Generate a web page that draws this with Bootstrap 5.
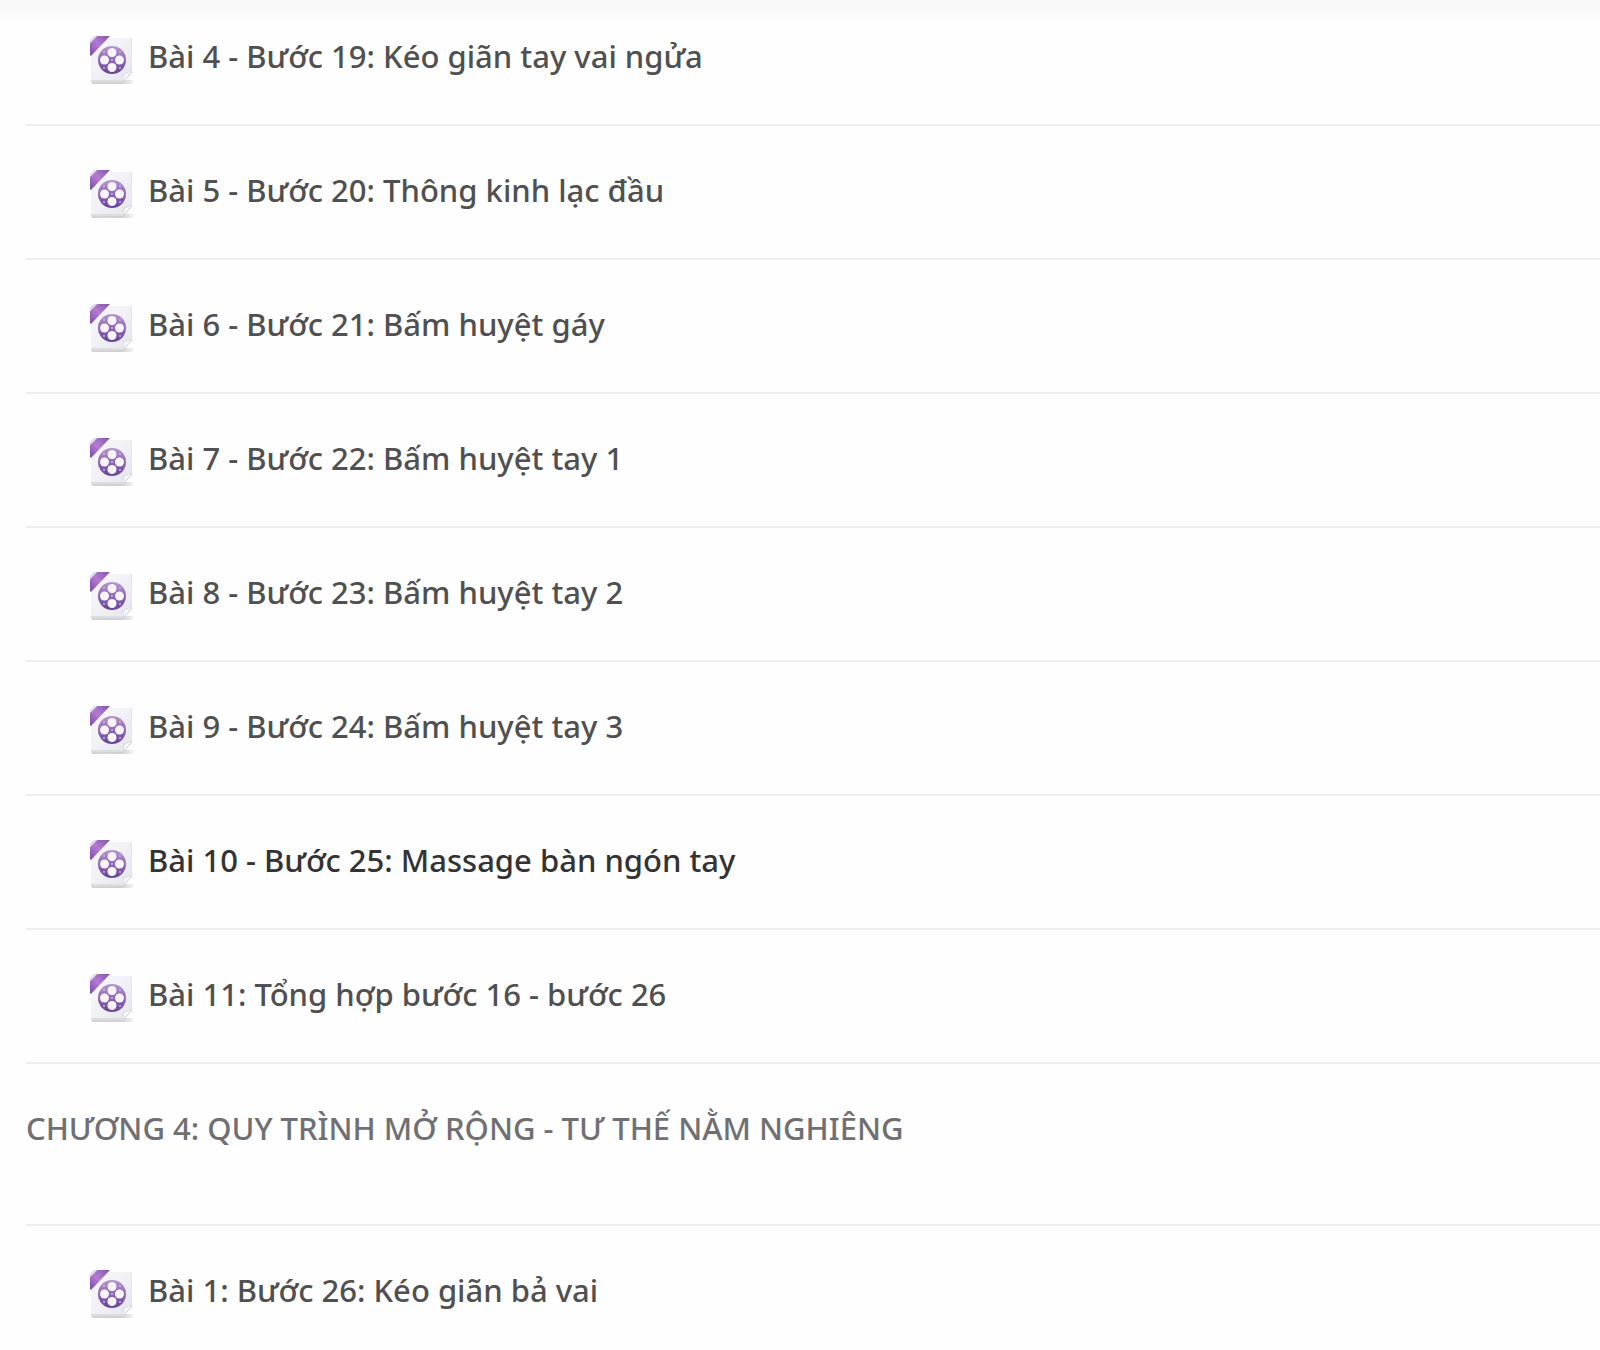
<!DOCTYPE html>
<html lang="vi">
<head>
<meta charset="utf-8">
<meta name="viewport" content="width=device-width, initial-scale=1">
<title>Chương trình học</title>
<link href="https://cdn.jsdelivr.net/npm/bootstrap@5.3.0/dist/css/bootstrap.min.css" rel="stylesheet">
<style>
body { background: #fefefe; font-family: "Noto Sans", "Open Sans", sans-serif; font-size: 31px; font-weight: 500; line-height: 40px; }
.page-top { background: linear-gradient(#f8f8f8, #fefefe 28px); }
.course { padding-left: 26px; }
.lesson { padding: 44px 16px 40px 62px; border-bottom: 2px solid #eee; }
.lesson-first { padding-top: 36px; }
.lesson-last { padding-bottom: 32px; border-bottom: 0; }
.lesson a { color: #505050; gap: 12px; }
.lesson a:hover, .lesson a.current { color: #333; }
.lesson svg { width: 48px; height: 48px; }
.chapter { font-size: 31px; font-weight: 500; line-height: 40px; color: #707074; padding: 44px 16px 76px 0; border-bottom: 2px solid #eee; }
</style>
</head>
<body>
<svg width="0" height="0" class="d-block" aria-hidden="true">
  <defs>
    <linearGradient id="paper" x1="0" y1="0" x2="1" y2="1"><stop offset="0" stop-color="#fafafc"/><stop offset=".5" stop-color="#f0f0f6"/><stop offset="1" stop-color="#e4e4ec"/></linearGradient>
    <linearGradient id="ribbon" x1="0" y1="1" x2="1" y2="0"><stop offset="0" stop-color="#7c4ca6"/><stop offset=".5" stop-color="#b57bd4"/><stop offset="1" stop-color="#7e55a5"/></linearGradient>
    <linearGradient id="reel" x1="0" y1="0" x2="0" y2="1"><stop offset="0" stop-color="#b697cf"/><stop offset=".5" stop-color="#9168b5"/><stop offset="1" stop-color="#654398"/></linearGradient>
    <linearGradient id="shade" x1="0" y1="0" x2="1" y2="0"><stop offset="0" stop-color="#d4d4d6"/><stop offset=".7" stop-color="#d0d0d2"/><stop offset="1" stop-color="#f4f4f4"/></linearGradient>
  </defs>
  <symbol id="film" viewBox="0 0 48 48">
    <path d="M3 44h43l-2 4H4z" fill="url(#shade)"/>
    <path d="M18 2h26v34l-9 10H3V18z" fill="url(#paper)"/>
    <path d="M43.500 2v34" stroke="#e4e4e9"/>
    <path d="M3 45h32" stroke="#dcdce1" stroke-width="2"/>
    <path d="M35 46l1-8 8-3z" fill="#f8f8fb"/>
    <path d="M35 45l1-7 8-3" stroke="#dadae1" fill="none"/>
    <path d="M35 46l9-10" stroke="#cdcdd5" fill="none"/>
    <path d="M9 0h13L3 20l-1-1V7z" fill="url(#ribbon)"/>
    <path d="M2 7l7-7h-3L2 4z" fill="#e4d6ee"/>
    <circle cx="24" cy="24" r="14" fill="url(#reel)"/>
    <g fill="#f7f5fb"><circle cx="24" cy="16.500" r="4.500"/><circle cx="24" cy="31.500" r="4.500"/><circle cx="16.500" cy="24" r="4.500"/><circle cx="31.500" cy="24" r="4.500"/></g>
    <g fill="#c9b4dc"><circle cx="24" cy="24" r="1"/><circle cx="16" cy="16" r="1"/><circle cx="32" cy="16" r="1"/><circle cx="16" cy="32" r="1"/><circle cx="32" cy="32" r="1"/></g>
  </symbol>
</svg>
<main class="page-top">
  <div class="course">
    <ul class="list-unstyled m-0">
      <li class="lesson lesson-first"><a href="#" class="d-flex text-decoration-none"><svg class="flex-shrink-0" aria-hidden="true"><use href="#film"/></svg><span>Bài 4 - Bước 19: Kéo giãn tay vai ngửa</span></a></li>
      <li class="lesson"><a href="#" class="d-flex text-decoration-none"><svg class="flex-shrink-0" aria-hidden="true"><use href="#film"/></svg><span>Bài 5 - Bước 20: Thông kinh lạc đầu</span></a></li>
      <li class="lesson"><a href="#" class="d-flex text-decoration-none"><svg class="flex-shrink-0" aria-hidden="true"><use href="#film"/></svg><span>Bài 6 - Bước 21: Bấm huyệt gáy</span></a></li>
      <li class="lesson"><a href="#" class="d-flex text-decoration-none"><svg class="flex-shrink-0" aria-hidden="true"><use href="#film"/></svg><span>Bài 7 - Bước 22: Bấm huyệt tay 1</span></a></li>
      <li class="lesson"><a href="#" class="d-flex text-decoration-none"><svg class="flex-shrink-0" aria-hidden="true"><use href="#film"/></svg><span>Bài 8 - Bước 23: Bấm huyệt tay 2</span></a></li>
      <li class="lesson"><a href="#" class="d-flex text-decoration-none"><svg class="flex-shrink-0" aria-hidden="true"><use href="#film"/></svg><span>Bài 9 - Bước 24: Bấm huyệt tay 3</span></a></li>
      <li class="lesson"><a href="#" class="d-flex text-decoration-none current"><svg class="flex-shrink-0" aria-hidden="true"><use href="#film"/></svg><span>Bài 10 - Bước 25: Massage bàn ngón tay</span></a></li>
      <li class="lesson"><a href="#" class="d-flex text-decoration-none"><svg class="flex-shrink-0" aria-hidden="true"><use href="#film"/></svg><span>Bài 11: Tổng hợp bước 16 - bước 26</span></a></li>
    </ul>
    <h2 class="chapter text-uppercase m-0">Chương 4: Quy trình mở rộng - Tư thế nằm nghiêng</h2>
    <ul class="list-unstyled m-0">
      <li class="lesson lesson-last"><a href="#" class="d-flex text-decoration-none"><svg class="flex-shrink-0" aria-hidden="true"><use href="#film"/></svg><span>Bài 1: Bước 26: Kéo giãn bả vai</span></a></li>
    </ul>
  </div>
</main>
<script src="https://cdn.jsdelivr.net/npm/bootstrap@5.3.0/dist/js/bootstrap.bundle.min.js"></script>
</body>
</html>
